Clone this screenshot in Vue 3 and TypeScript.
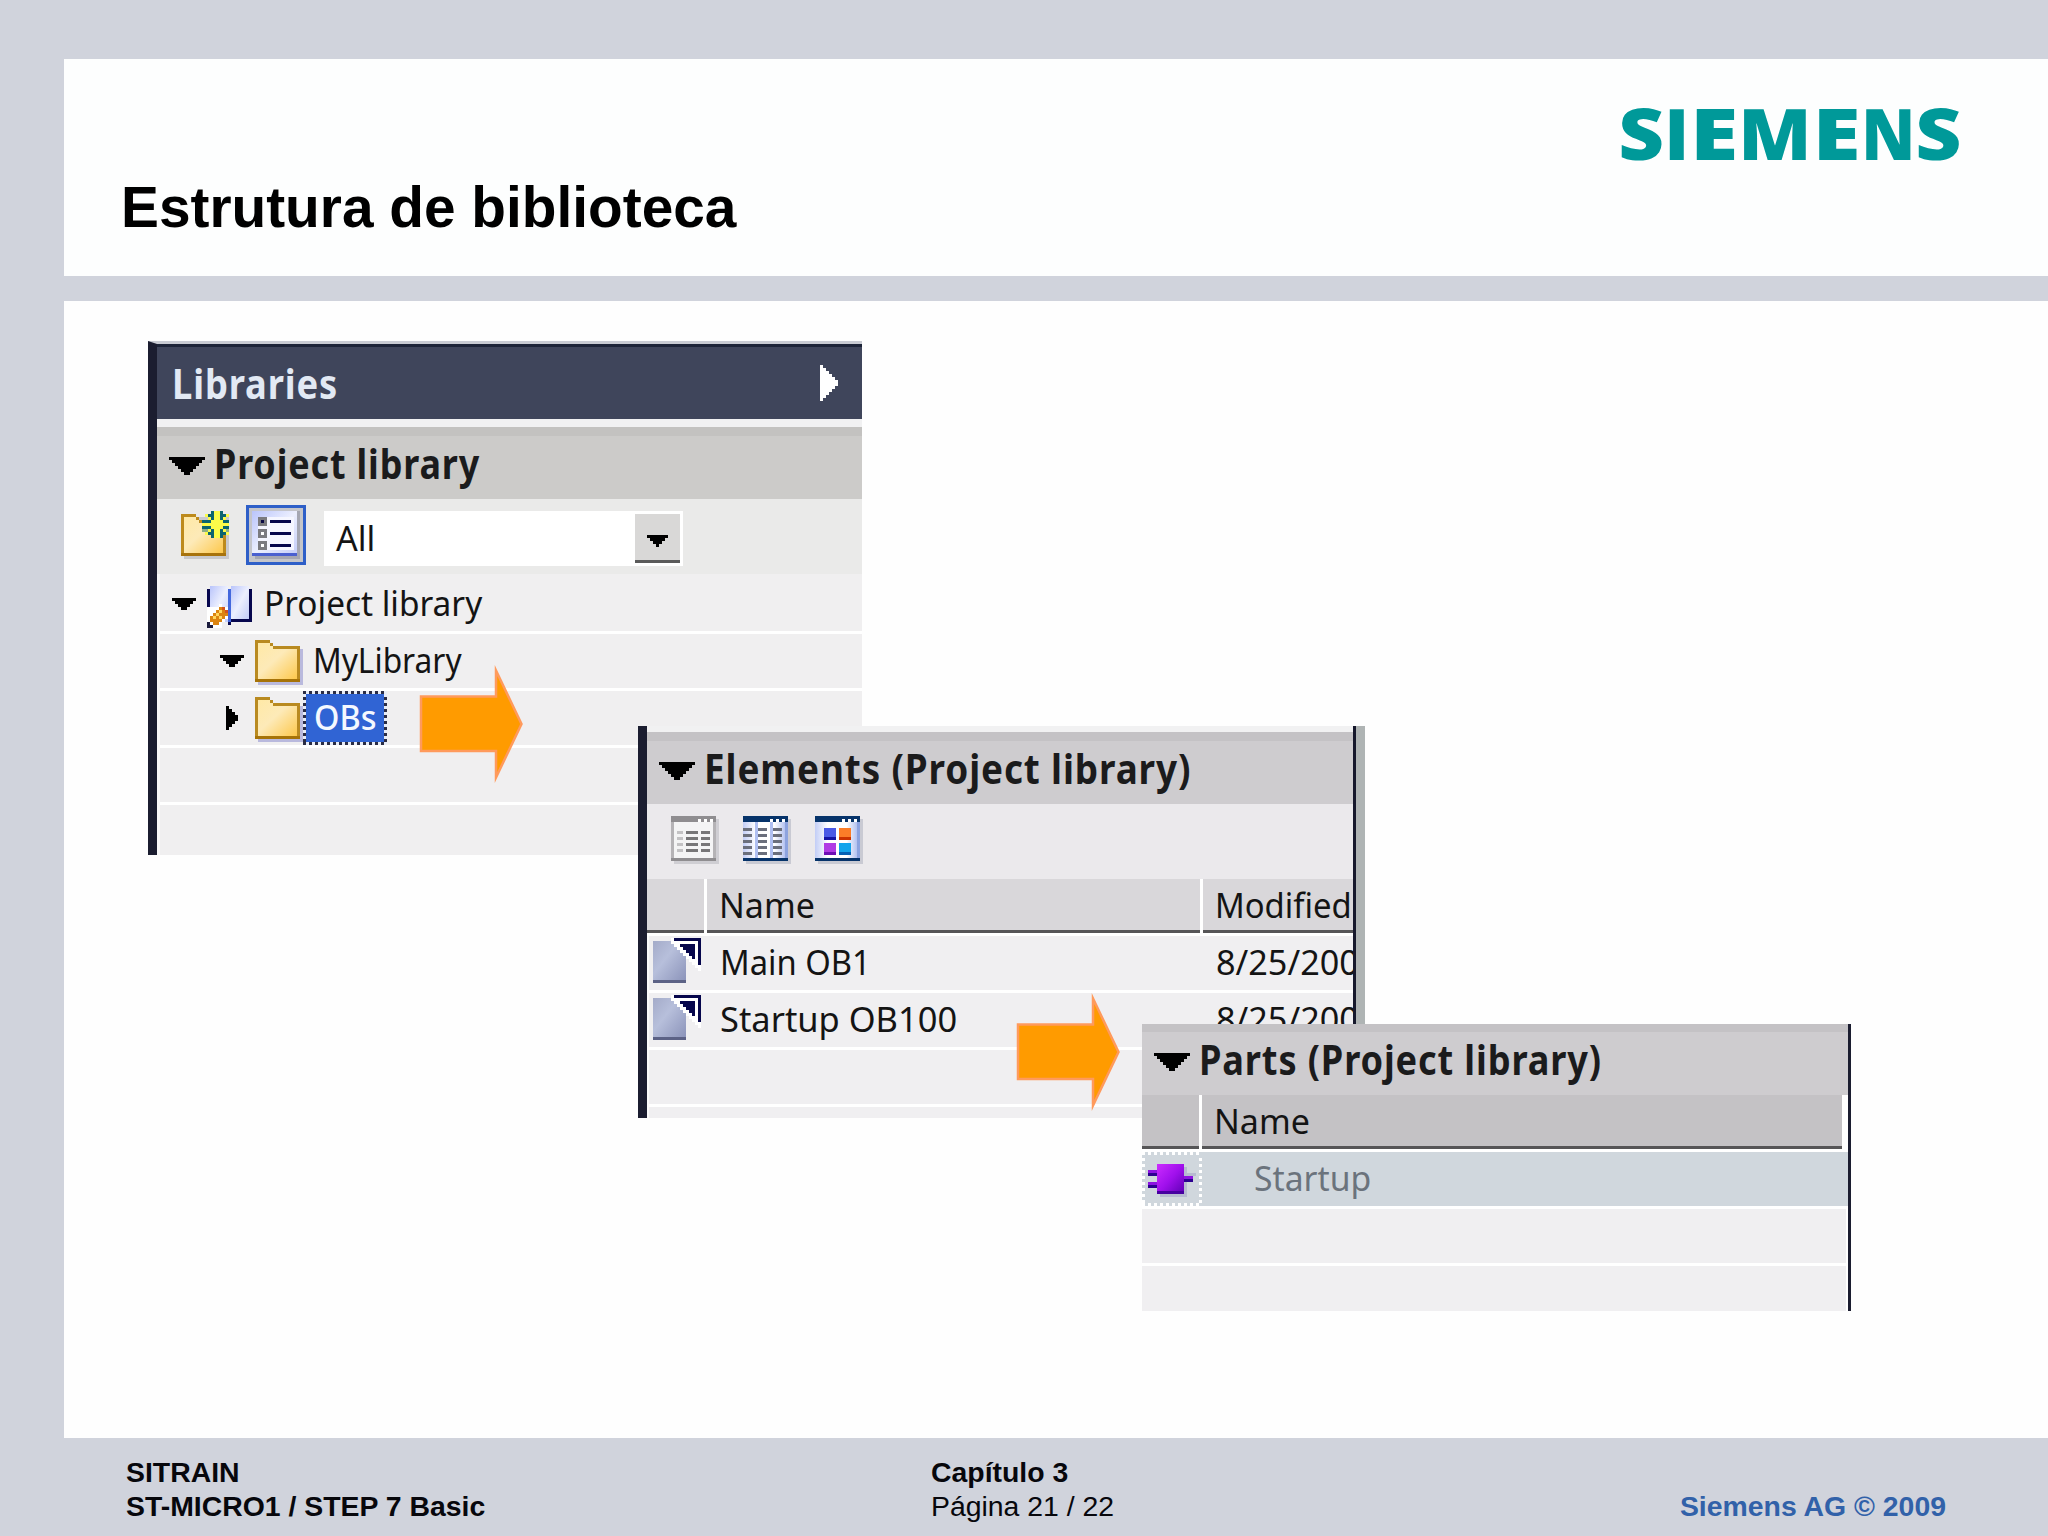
<script setup lang="ts">
import { h, onMounted, ref, type FunctionalComponent } from 'vue'

interface TreeRow {
  label: string
  indent: number
  open: boolean
  icon: 'book' | 'folder'
  selected?: boolean
}

const treeRows: TreeRow[] = [
  { label: 'Project library', indent: 12, open: true, icon: 'book' },
  { label: 'MyLibrary', indent: 60, open: true, icon: 'folder' },
  { label: 'OBs', indent: 66, open: false, icon: 'folder', selected: true },
]
const treeWidths = [218, 149, 62]

const elements = [
  { name: 'Main OB1', width: 151, modified: '8/25/2009' },
  { name: 'Startup OB100', width: 237, modified: '8/25/2009' },
]

// Wordmark letters with the left and right edge of each one's ink.
const logo = ref([
  { ch: 'S', l: 1.7, r: 42, t: '' },
  { ch: 'I', l: 49.3, r: 64.5, t: '' },
  { ch: 'E', l: 76.3, r: 114.7, t: '' },
  { ch: 'M', l: 123.5, r: 186.5, t: '' },
  { ch: 'E', l: 198.7, r: 237, t: '' },
  { ch: 'N', l: 245.7, r: 290.5, t: '' },
  { ch: 'S', l: 298.7, r: 339.3, t: '' },
])

onMounted(() => {
  const ctx = document.createElement('canvas').getContext('2d')
  if (!ctx) return
  ctx.font = '800 71px "Open Sans", "Noto Sans", sans-serif'
  for (const g of logo.value) {
    const m = ctx.measureText(g.ch)
    const s = (g.r - g.l) / (m.actualBoundingBoxRight + m.actualBoundingBoxLeft)
    g.t = `translate(${g.l + m.actualBoundingBoxLeft * s} 51.7) scale(${s} 1)`
  }
})

// Stretches a label horizontally to the given width in pixels.
const vFit = {
  mounted(el: HTMLElement, binding: { value: number }) {
    const natural = el.offsetWidth
    if (natural > 0) el.style.transform = `scaleX(${binding.value / natural})`
  },
}

// Stepped triangle made of 3px blocks.
const Caret: FunctionalComponent<{ size: number; dir: 'down' | 'right' }> = (props) => {
  const rows: number[] = []
  for (let n = props.size; n > 0; n -= 2) rows.push(n)
  const down = props.dir === 'down'
  const w = down ? props.size : rows.length
  const hgt = down ? rows.length : props.size
  return h(
    'svg',
    { width: w * 3, height: hgt * 3, viewBox: `0 0 ${w} ${hgt}`, 'shape-rendering': 'crispEdges', style: 'display:block;flex:none' },
    rows.map((n, i) =>
      down
        ? h('rect', { x: i, y: i, width: n, height: 1, fill: 'currentColor' })
        : h('rect', { x: i, y: i, width: 1, height: n, fill: 'currentColor' }),
    ),
  )
}
Caret.props = ['size', 'dir']
</script>

<template>
  <div class="slide">
    <svg class="defs" width="0" height="0">
      <defs>
        <linearGradient id="gFolder" x1="0" y1="0" x2="1" y2="1">
          <stop offset="0" stop-color="#ffe9a6" /><stop offset=".45" stop-color="#fdeab8" /><stop offset="1" stop-color="#fdc84c" />
        </linearGradient>
        <linearGradient id="gPage" x1="0" y1="0" x2="1" y2="1">
          <stop offset="0" stop-color="#b9c4fb" /><stop offset=".5" stop-color="#eceffe" /><stop offset="1" stop-color="#c3ccf8" />
        </linearGradient>
        <linearGradient id="gWin" x1="0" y1="0" x2="1" y2="0">
          <stop offset="0" stop-color="#c2cdf6" /><stop offset=".3" stop-color="#fff" /><stop offset=".75" stop-color="#fff" /><stop offset="1" stop-color="#b4c2f0" />
        </linearGradient>
        <linearGradient id="gDoc" x1="0" y1="0" x2="1" y2="1">
          <stop offset="0" stop-color="#a4abc9" /><stop offset=".4" stop-color="#b7bfdb" /><stop offset="1" stop-color="#8991b8" />
        </linearGradient>
        <linearGradient id="gPlug" x1="0" y1="0" x2="1" y2="1">
          <stop offset="0" stop-color="#cc2cff" /><stop offset=".5" stop-color="#a010ec" /><stop offset="1" stop-color="#5c00b4" />
        </linearGradient>
      </defs>
    </svg>

    <header class="head">
      <h1>Estrutura de biblioteca</h1>
      <svg class="logo" width="350" height="70" viewBox="0 0 350 70">
        <text v-for="(g, i) in logo" :key="i" :transform="g.t">{{ g.ch }}</text>
      </svg>
    </header>

    <main class="body">
      <section class="panel libs">
        <div class="libs-title">
          <span v-fit="166" class="bold">Libraries</span>
          <Caret :size="12" dir="right" />
        </div>
        <div class="strip" />
        <div class="section">
          <Caret :size="12" dir="down" />
          <span v-fit="266" class="bold">Project library</span>
        </div>
        <div class="tools">
          <svg class="newf" width="51" height="48" viewBox="0 0 17 16" shape-rendering="crispEdges">
            <path d="M1 2h15v14H1z" fill="#c9c9cc" />
            <path d="M0 1h5v1h1v1h9v12H0z" fill="#bd8a1c" />
            <path d="M1 2h4v1h1v1h8v10H1z" fill="url(#gFolder)" />
            <path d="M0 14h15v1H0z" fill="#a8730c" />
            <path d="M7 3h9v4H7zM9 1h6v7H9z" fill="#8fae86" />
            <path d="M8 1h2v1h1v1h-2v-1h-1zM10 0h1v3h-1zM13 0h1v3h-1zM14 1h2v1h-1v1h-1zM7 3h3v1H7zM14 3h2v1h-2zM7 6h3v-1H7zM14 5h2v1h-2zM8 7h1v-1h2v1h-1v1H8zM10 6h1v3h-1zM13 6h1v3h-1zM14 6h1v1h1v1h-2z" fill="#0b6470" />
            <path d="M11 0h2v3h1v1h2v1h-2v1h-1v3h-2V6h-1V5H7V4h3V3h1zM8 1h1v1H8zM9 2h1v1H9zM15 1h1v1h-1zM14 2h1v1h-1zM9 6h1v1H9zM8 7h1v1H8zM14 6h1v1h-1zM15 7h1v1h-1z" fill="#fbfb4a" />
          </svg>
          <svg class="listb" width="60" height="60" viewBox="0 0 20 20" shape-rendering="crispEdges">
            <path d="M0 0h20v20H0z" fill="#2e5fc8" />
            <path d="M1 1h18v18H1z" fill="#c4c5ca" />
            <path d="M3 2h15v16H3z" fill="#a5a7b2" />
            <path d="M2 2h15v15H2z" fill="url(#gPage)" />
            <path d="M4 4h12v11H4z" fill="#f5f6ff" />
            <path d="M2 16h15v1H2z" fill="#4a60d0" />
            <path d="M4 4h3v3H4zM4 8h3v3H4zM4 12h3v3H4z" fill="#7b7b80" />
            <path d="M5 5h1v1H5z" fill="#0a0a45" />
            <path d="M5 9h1v1H5zM5 13h1v1H5z" fill="#fff" />
            <path d="M8 5h7v1H8zM8 9h7v1H8zM8 13h7v1H8z" fill="#06064c" />
          </svg>
          <div class="combo">
            <span v-fit="39" class="reg">All</span>
            <div class="combo-btn"><Caret :size="7" dir="down" /></div>
          </div>
        </div>
        <div v-for="(row, i) in treeRows" :key="row.label" class="tree-row" :class="{ first: i === 0 }">
          <div class="tree-lead" :style="{ paddingLeft: row.indent + 'px' }">
            <Caret :size="8" :dir="row.open ? 'down' : 'right'" />
          </div>
          <svg v-if="row.icon === 'book'" class="book" width="45" height="42" viewBox="0 0 15 14" shape-rendering="crispEdges">
            <path d="M0 1h1v6H0zM14 1h1v11H8v1H7v-2h7z" fill="#07074e" />
            <path d="M1 0h6v12H1z" fill="url(#gPage)" />
            <path d="M8 0h6v11H8z" fill="url(#gPage)" />
            <path d="M7 1h1v11H7z" fill="#4468dd" />
            <path d="M0 7h4v-1h1v1h2v4H6v1H5v2H0z" fill="#fff" />
            <path d="M4 7h2v1h1v2H6v1H5v1H4v1H2v-1H1v-2h1V9h1V8h1z" fill="#dc8410" />
            <path d="M4 8h1v1H4zM3 9h1v1H3zM2 10h1v1H2zM4 10h1v1H4z" fill="#ffd75e" />
            <path d="M5 7h1v1h1v1H6V8H5z" fill="#d4541c" />
            <path d="M0 12h1v1h1v1H0z" fill="#1a1a3c" />
          </svg>
          <svg v-else class="folder" width="48" height="45" viewBox="0 0 16 15" shape-rendering="crispEdges">
            <path d="M1 3h15v12H1z" fill="#b9b9dd" />
            <path d="M0 0h5v1h1v1h9v12H0z" fill="#b98a20" />
            <path d="M1 1h4v1h1v1h8v10H1z" fill="url(#gFolder)" />
            <path d="M0 13h15v1H0z" fill="#a67308" />
          </svg>
          <div class="cell" :class="{ selected: row.selected }">
            <span v-fit="treeWidths[i]" class="reg">{{ row.label }}</span>
          </div>
        </div>
        <div class="tree-row" />
        <div class="tree-row last" />
      </section>

      <section class="panel elems">
        <div class="elems-main">
          <div class="strip small" />
          <div class="section cool">
            <Caret :size="12" dir="down" />
            <span v-fit="487" class="bold">Elements (Project library)</span>
          </div>
          <div class="views">
            <svg width="48" height="48" viewBox="0 0 16 16" shape-rendering="crispEdges">
              <path d="M1 1h15v15H1z" fill="#cfced3" />
              <path d="M0 0h15v15H0z" fill="#b5b3b6" />
              <path d="M1 2h13v12H1z" fill="#f4f4f5" />
              <path d="M0 0h15v2H0zM0 14h15v1H0z" fill="#8f8d90" />
              <path d="M9 1h1v1H9zM11 1h1v1h-1zM13 1h1v1h-1z" fill="#fff" />
              <path d="M2 5h2v1H2zM2 7h2v1H2zM2 9h2v1H2zM2 11h2v1H2z" fill="#c3c2c4" />
              <path d="M5 5h4v1H5zM5 7h4v1H5zM5 9h4v1H5zM5 11h4v1H5zM10 5h3v1h-3zM10 7h3v1h-3zM10 9h3v1h-3zM10 11h3v1h-3z" fill="#777678" />
            </svg>
            <svg width="48" height="48" viewBox="0 0 16 16" shape-rendering="crispEdges">
              <path d="M1 1h15v15H1z" fill="#c9cad3" />
              <path d="M0 0h15v15H0z" fill="#8da3df" />
              <path d="M0 2h14v12H0z" fill="url(#gWin)" />
              <path d="M4 2h1v12H4zM9 2h1v12H9z" fill="#b0c0f2" />
              <path d="M0 0h15v2H0zM0 14h15v1H0z" fill="#06336a" />
              <path d="M9 1h1v1H9zM11 1h1v1h-1zM13 1h1v1h-1z" fill="#fff" />
              <path d="M0 4h3v1H0zM0 6h3v1H0zM0 8h3v1H0zM0 10h3v1H0zM0 12h3v1H0zM5 4h3v1H5zM5 6h3v1H5zM5 8h3v1H5zM5 10h3v1H5zM5 12h3v1H5zM10 4h3v1h-3zM10 6h3v1h-3zM10 8h3v1h-3zM10 10h3v1h-3zM10 12h3v1h-3z" fill="#6b6f7c" />
            </svg>
            <svg width="48" height="48" viewBox="0 0 16 16" shape-rendering="crispEdges">
              <path d="M1 1h15v15H1z" fill="#c9cad3" />
              <path d="M0 0h15v15H0z" fill="#8da3df" />
              <path d="M0 2h14v12H0z" fill="url(#gWin)" />
              <path d="M0 0h15v2H0zM0 14h15v1H0z" fill="#06336a" />
              <path d="M9 1h1v1H9zM11 1h1v1h-1zM13 1h1v1h-1z" fill="#fff" />
              <path d="M3 4h4v4H3z" fill="#4a5ae6" /><path d="M3 7h4v1H3z" fill="#1414a4" />
              <path d="M8 4h4v4H8z" fill="#fb7d28" /><path d="M8 7h4v1H8z" fill="#cc3300" />
              <path d="M3 9h4v4H3z" fill="#b03be4" /><path d="M3 12h4v1H3z" fill="#6d0fb4" />
              <path d="M8 9h4v4H8z" fill="#12a4ec" /><path d="M8 12h4v1H8z" fill="#0560b4" />
            </svg>
          </div>
          <div class="cols">
            <div class="col c1" />
            <div class="col c2"><span v-fit="96" class="reg">Name</span></div>
            <div class="col c3"><span v-fit="137" class="reg">Modified</span></div>
          </div>
          <div v-for="item in elements" :key="item.name" class="row">
            <div class="r1">
              <svg width="51" height="48" viewBox="0 0 17 16" shape-rendering="crispEdges">
                <path d="M0 1h11v14H0z" fill="url(#gDoc)" />
                <path d="M0 14h11v1H0z" fill="#5c6286" />
                <path d="M6 0h10v11h-1v-1h-1V9h-1V8h-1V7h-1V6h-1V5H9V4H8V3H7V2H6z" fill="#fff" />
                <path d="M7 0h9v9h-1V1H7zM9 2h5v5h-1V6h-1V5h-1V4h-1V3H9z" fill="#06064c" />
              </svg>
            </div>
            <div class="r2"><span v-fit="item.width" class="reg">{{ item.name }}</span></div>
            <div class="r3"><span v-fit="162" class="reg">{{ item.modified }}</span></div>
          </div>
          <div class="row" />
          <div class="row last" />
        </div>
      </section>

      <section class="panel parts">
        <div class="section cool">
          <Caret :size="12" dir="down" />
          <span v-fit="403" class="bold">Parts (Project library)</span>
        </div>
        <div class="cols">
          <div class="col c1" />
          <div class="col c2"><span v-fit="96" class="reg">Name</span></div>
        </div>
        <div class="row chosen">
          <div class="plug">
            <svg width="54" height="54" viewBox="0 0 18 18" shape-rendering="crispEdges">
              <path d="M4 4h9v10H4zM13 6h3v1h-3z" fill="#b7bbd0" />
              <path d="M0 5h3v1H0zM0 9h3v1H0zM12 7h3v1h-3z" fill="#8c14e0" />
              <path d="M0 6h3v1H0zM0 10h3v1H0zM12 8h3v1h-3z" fill="#2c0090" />
              <path d="M3 3h9v10H3z" fill="url(#gPlug)" />
              <path d="M3 12h9v1H3z" fill="#4600a0" />
            </svg>
          </div>
          <span v-fit="117" class="reg">Startup</span>
        </div>
        <div class="row" />
        <div class="row last" />
      </section>

      <svg class="arrow a1" width="106" height="120" viewBox="0 0 106 120">
        <path d="M2 32.500H77V6.500L102.500 60L77 113.500V87H2z" />
      </svg>
      <svg class="arrow a2" width="106" height="120" viewBox="0 0 106 120">
        <path d="M2 32.500H77V6.500L102.500 60L77 113.500V87H2z" />
      </svg>
    </main>

    <footer class="foot">
      <div class="f1"><b>SITRAIN</b><b>ST-MICRO1 / STEP 7 Basic</b></div>
      <div class="f2"><b>Capítulo 3</b><span>Página 21 / 22</span></div>
      <div class="f3"><b>Siemens AG © 2009</b></div>
    </footer>
  </div>
</template>

<style>
body {
  margin: 0;
}
</style>

<style scoped>
.slide {
  width: 2048px;
  height: 1536px;
  box-sizing: border-box;
  padding: 59px 0 0 64px;
  background: #d0d3dc;
  overflow: hidden;
  position: relative;
  display: flex;
  flex-direction: column;
  font-family: 'Liberation Sans', Arial, sans-serif;
}
.defs {
  position: absolute;
}
.head {
  height: 217px;
  flex: none;
  background: #fdfefe;
  display: flex;
  justify-content: space-between;
  align-items: flex-start;
}
h1 {
  margin: 117px 0 0 57px;
  font-size: 56.8px;
  line-height: 64px;
  font-weight: 700;
  color: #000;
  white-space: nowrap;
}
.logo {
  margin: 49px 78px 0 0;
  overflow: visible;
  fill: #009999;
  font-family: 'Open Sans', 'Noto Sans', sans-serif;
  font-weight: 800;
  font-size: 71px;
}
.body {
  margin-top: 25px;
  height: 1137px;
  flex: none;
  background: #fefefe;
}
.bold,
.reg {
  display: inline-block;
  flex: none;
  white-space: pre;
  transform-origin: 0 0;
  align-self: flex-start;
  font-family: 'Noto Sans', 'Open Sans', sans-serif;
}
.bold {
  font-size: 42px;
  line-height: 71px;
  font-weight: 700;
  letter-spacing: 1px;
  color: #1b1b1c;
}
.reg {
  font-size: 34px;
  line-height: 52px;
  color: #141414;
}
.panel {
  position: absolute;
  box-sizing: border-box;
  display: flex;
  flex-direction: column;
  overflow: hidden;
}
.strip {
  height: 8px;
  flex: none;
  background: #f1f1f2;
}
.strip.small {
  height: 6px;
}
.section {
  height: 72px;
  flex: none;
  box-sizing: border-box;
  border-top: 9px solid #c3c2c0;
  background: #cccbc9;
  display: flex;
  padding-left: 12px;
  gap: 9px;
}
.section > svg {
  margin-top: 21px;
}
.section .bold {
  margin-top: -9px;
}
.section.cool {
  background: #cecccf;
  border-top-color: #c4c2c5;
}

.libs {
  left: 148px;
  top: 341px;
  width: 714px;
  height: 514px;
  border-left: 9px solid #1b1d30;
  border-top: 3px solid #c9cbd3;
  background: #f9f9f9;
}
.libs-title {
  height: 75px;
  flex: none;
  box-sizing: border-box;
  box-shadow: inset 0 3px 0 #1d2438;
  background: #3f455b;
  display: flex;
  justify-content: space-between;
  padding: 3px 24px 0 15px;
  color: #fff;
}
.libs-title .bold {
  color: #e2e9f4;
}
.libs-title > svg {
  margin-top: 18px;
}
.tools {
  height: 75px;
  flex: none;
  background: #eaeae9;
  display: flex;
  align-items: flex-start;
}
.newf {
  margin: 12px 0 0 24px;
}
.listb {
  margin: 6px 0 0 14px;
}
.combo {
  margin: 12px 0 0 18px;
  width: 359px;
  height: 55px;
  box-sizing: border-box;
  padding: 3px 3px 3px 12px;
  background: #fff;
  display: flex;
  justify-content: space-between;
}
.combo .reg {
  margin-top: -2px;
}
.combo-btn {
  width: 45px;
  height: 49px;
  box-sizing: border-box;
  border-bottom: 3px solid #5a5a5a;
  background: #d9d8d7;
  display: flex;
  justify-content: center;
  padding-top: 21px;
  color: #000;
}
.tree-row {
  height: 57px;
  flex: none;
  box-sizing: border-box;
  margin-left: 3px;
  border-bottom: 3px solid #fff;
  background: #f0eff0;
  display: flex;
  align-items: flex-start;
}
.tree-row.first {
  height: 60px;
  padding-top: 3px;
}
.tree-row.last {
  height: 51px;
  border: 0;
}
.tree-lead {
  width: 95px;
  height: 54px;
  box-sizing: border-box;
  display: flex;
  align-items: center;
  flex: none;
}
.first .tree-lead {
  width: 47px;
}
.book {
  margin-top: 9px;
}
.folder {
  margin-top: 6px;
}
.cell {
  height: 54px;
  padding-left: 10px;
  display: flex;
}
.first .cell {
  padding-left: 12px;
}
.selected {
  width: 84px;
  box-sizing: border-box;
  padding-left: 11px;
  background:
    repeating-linear-gradient(90deg, #2a2c44 0 3px, #e8ecf6 3px 6px) 0 0 / 100% 3px no-repeat,
    repeating-linear-gradient(90deg, #2a2c44 0 3px, #e8ecf6 3px 6px) 0 100% / 100% 3px no-repeat,
    repeating-linear-gradient(180deg, #2a2c44 0 3px, #e8ecf6 3px 6px) 0 0 / 3px 100% no-repeat,
    repeating-linear-gradient(180deg, #2a2c44 0 3px, #e8ecf6 3px 6px) 100% 0 / 3px 100% no-repeat,
    #3064d4;
}
.selected .reg {
  color: #f4f8ff;
  font-weight: 500;
}

.cols {
  display: flex;
  gap: 3px;
  height: 57px;
  flex: none;
  background: #fff;
}
.col {
  height: 54px;
  box-sizing: border-box;
  background: #d9d7da;
  border-bottom: 3px solid #565557;
  overflow: hidden;
}
.c1 {
  width: 57px;
  flex: none;
}
.c2 {
  width: 493px;
  flex: none;
  padding-left: 12px;
}
.c3 {
  flex: 1;
  min-width: 0;
  padding-left: 12px;
}
.row {
  height: 57px;
  flex: none;
  box-sizing: border-box;
  margin-left: 2px;
  border-bottom: 3px solid #fff;
  background: #f0eff1;
  display: flex;
}
.elems {
  left: 638px;
  top: 726px;
  width: 727px;
  height: 392px;
  border-left: 9px solid #1b1d30;
  border-right: 9px solid #afb4b4;
}
.elems-main {
  width: 709px;
  height: 392px;
  box-sizing: border-box;
  border-right: 3px solid #16182c;
  background: #fbfbfb;
  display: flex;
  flex-direction: column;
  overflow: hidden;
}
.views {
  height: 75px;
  flex: none;
  box-sizing: border-box;
  background: #ebe9ec;
  padding: 12px 0 0 24px;
  display: flex;
  gap: 24px;
}
.elems .row.last {
  height: 12px;
  border: 0;
}
.r1 {
  width: 58px;
  flex: none;
  padding: 2px 0 0 4px;
  box-sizing: border-box;
}
.r2 {
  width: 496px;
  flex: none;
  box-sizing: border-box;
  padding-left: 13px;
}
.r3 {
  flex: 1;
  min-width: 0;
  overflow: hidden;
  padding-left: 13px;
}

.parts {
  left: 1142px;
  top: 1024px;
  width: 709px;
  height: 287px;
  border-right: 3px solid #1b1d30;
  background: #fff;
}
.parts .section {
  height: 71px;
  border-top-width: 8px;
}
.parts .col {
  background: #c4c2c5;
}
.parts .c2 {
  width: 640px;
  box-sizing: border-box;
}
.parts .row {
  margin: 0 2px 0 0;
}
.parts .chosen {
  background: #d0d7dd;
  margin-right: 0;
}
.parts .row.last {
  height: 45px;
  border: 0;
}
.plug {
  width: 60px;
  height: 54px;
  flex: none;
  margin-right: 52px;
  box-sizing: border-box;
  padding: 3px 0 0 6px;
  background:
    repeating-linear-gradient(90deg, #fff 0 3px, #d0d7dd 3px 6px) 0 0 / 100% 3px no-repeat,
    repeating-linear-gradient(90deg, #fff 0 3px, #d0d7dd 3px 6px) 0 100% / 100% 3px no-repeat,
    repeating-linear-gradient(180deg, #fff 0 3px, #d0d7dd 3px 6px) 0 0 / 3px 100% no-repeat,
    repeating-linear-gradient(180deg, #fff 0 3px, #d0d7dd 3px 6px) 100% 0 / 3px 100% no-repeat;
}
.parts .chosen .reg {
  color: #6b737c;
}

.arrow {
  position: absolute;
  fill: #ff9b00;
  stroke: #ff9a5c;
  stroke-width: 2.5;
  stroke-miterlimit: 10;
}
.a1 {
  left: 419px;
  top: 664px;
}
.a2 {
  left: 1016px;
  top: 992px;
}

.foot {
  flex: 1;
  display: flex;
  padding: 17px 102px 0 62px;
  font-size: 28.4px;
  line-height: 34px;
  color: #07070c;
  white-space: nowrap;
}
.foot > div {
  display: flex;
  flex-direction: column;
}
.f1 {
  width: 805px;
}
.f3 {
  margin-left: auto;
  padding-top: 34px;
  color: #3161a9;
}
</style>
